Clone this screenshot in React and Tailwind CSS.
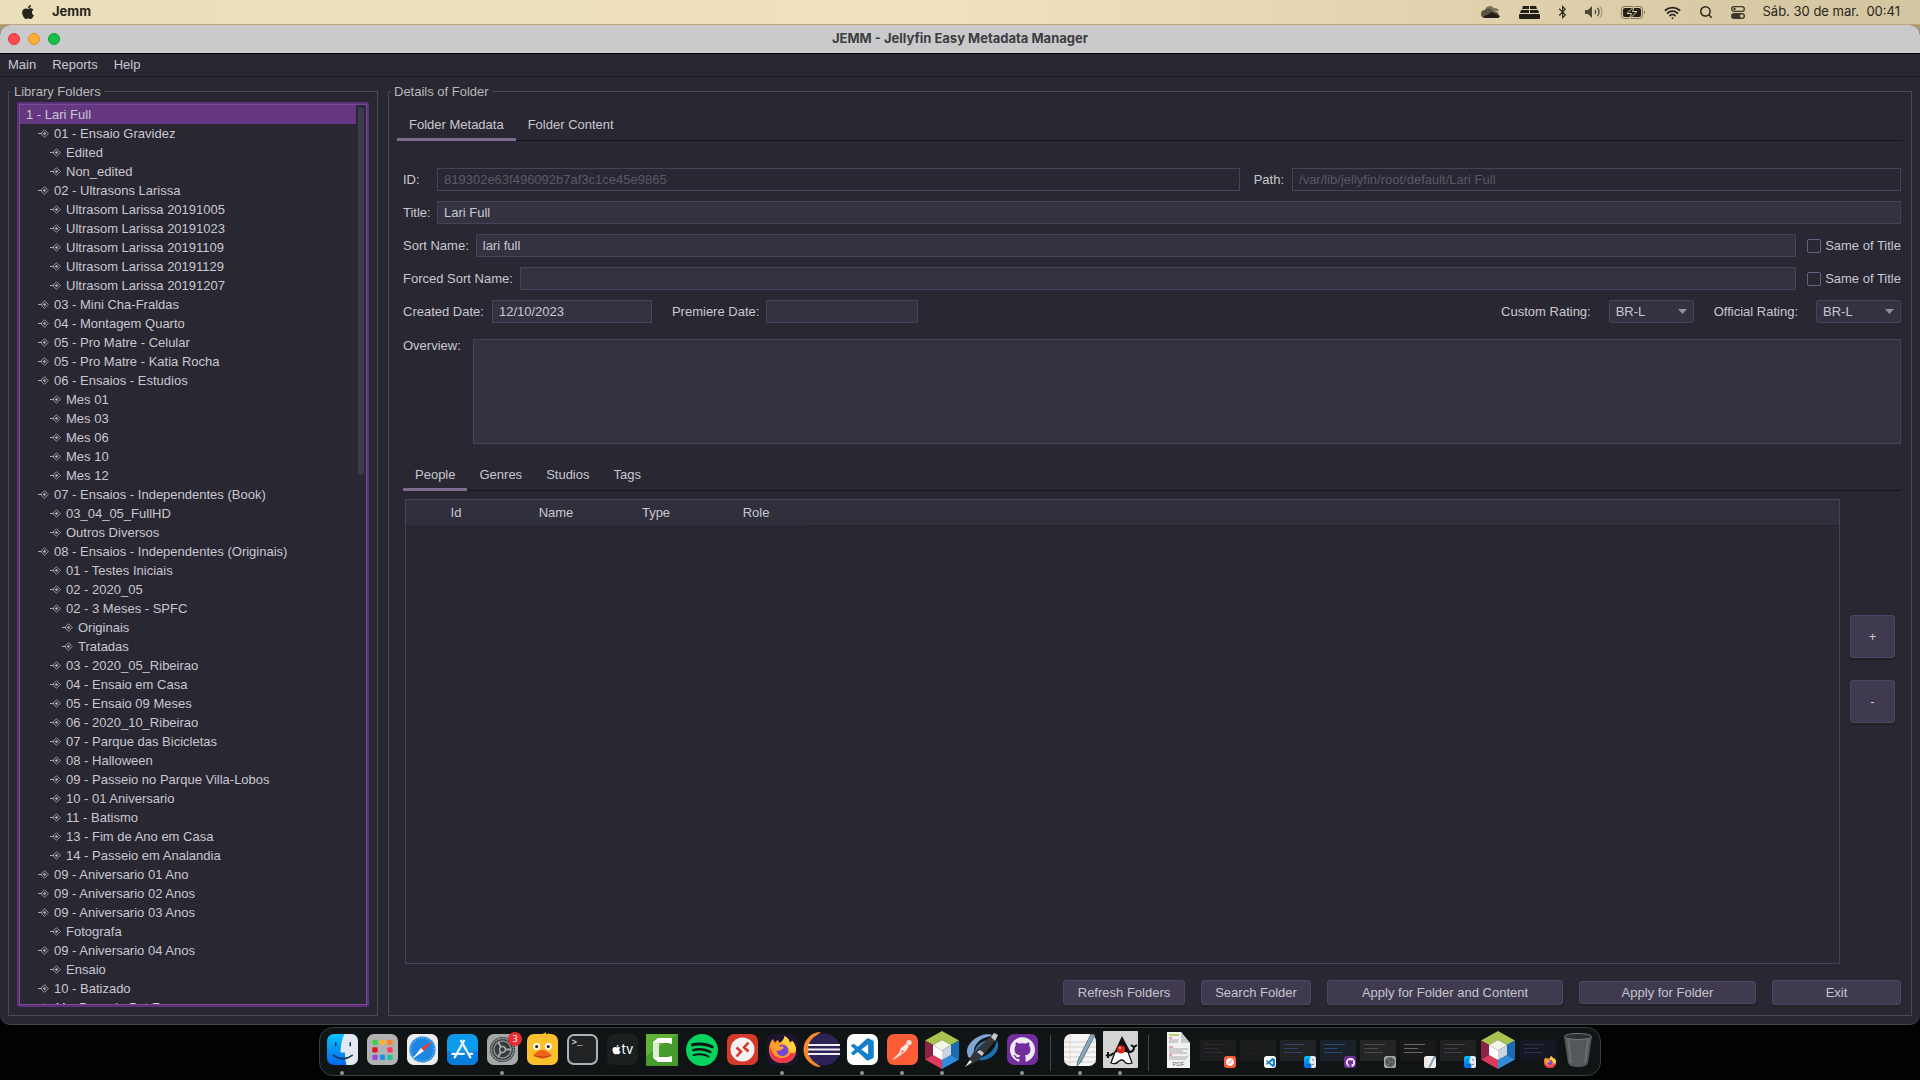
import { useState } from "react";
import { FaApple, FaBluetoothB } from "react-icons/fa";
import { SiSpotify, SiGithub, SiPostman } from "react-icons/si";
import { BiLogoVisualStudio } from "react-icons/bi";
import { Search, Wifi } from "lucide-react";

const FOLDERS = [
  [0, "1 - Lari Full"],
  [1, "01 - Ensaio Gravidez"],
  [2, "Edited"],
  [2, "Non_edited"],
  [1, "02 - Ultrasons Larissa"],
  [2, "Ultrasom Larissa 20191005"],
  [2, "Ultrasom Larissa 20191023"],
  [2, "Ultrasom Larissa 20191109"],
  [2, "Ultrasom Larissa 20191129"],
  [2, "Ultrasom Larissa 20191207"],
  [1, "03 - Mini Cha-Fraldas"],
  [1, "04 - Montagem Quarto"],
  [1, "05 - Pro Matre - Celular"],
  [1, "05 - Pro Matre - Katia Rocha"],
  [1, "06 - Ensaios - Estudios"],
  [2, "Mes 01"],
  [2, "Mes 03"],
  [2, "Mes 06"],
  [2, "Mes 10"],
  [2, "Mes 12"],
  [1, "07 - Ensaios - Independentes (Book)"],
  [2, "03_04_05_FullHD"],
  [2, "Outros Diversos"],
  [1, "08 - Ensaios - Independentes (Originais)"],
  [2, "01 - Testes Iniciais"],
  [2, "02 - 2020_05"],
  [2, "02 - 3 Meses - SPFC"],
  [3, "Originais"],
  [3, "Tratadas"],
  [2, "03 - 2020_05_Ribeirao"],
  [2, "04 - Ensaio em Casa"],
  [2, "05 - Ensaio 09 Meses"],
  [2, "06 - 2020_10_Ribeirao"],
  [2, "07 - Parque das Bicicletas"],
  [2, "08 - Halloween"],
  [2, "09 - Passeio no Parque Villa-Lobos"],
  [2, "10 - 01 Aniversario"],
  [2, "11 - Batismo"],
  [2, "13 - Fim de Ano em Casa"],
  [2, "14 - Passeio em Analandia"],
  [1, "09 - Aniversario 01 Ano"],
  [1, "09 - Aniversario 02 Anos"],
  [1, "09 - Aniversario 03 Anos"],
  [2, "Fotografa"],
  [1, "09 - Aniversario 04 Anos"],
  [2, "Ensaio"],
  [1, "10 - Batizado"],
  [1, "11 - Passeio Pet Zoo"],
];

const INDENT = ["pl-[6px]", "pl-[18px]", "pl-[30px]", "pl-[42px]"];

const FIELD = "h-[23px] min-w-0 rounded-none border border-[#45435a] bg-[#343241] px-[6px] outline-none";
const BUTTON = "rounded-[3px] border border-[#4b4766] bg-[#3f3a50] text-[#c6c5ce] shadow-[0_2px_1px_#222222]";

/* ---------- macOS menu bar ---------- */

const MacMenuBar = () => (
  <header className="flex h-[25px] shrink-0 items-center border-b border-[#bfa678] bg-linear-to-r from-[#eadfba] via-[#f1e0bc] to-[#d3c59f] px-5 font-[Inter,sans-serif] text-[13px] text-[#28251c]">
    <FaApple size={16} />
    <span className="ml-4 font-bold">Jemm</span>
    <div className="ml-auto flex items-center gap-[18px]">
      <svg width="20" height="14" viewBox="0 0 20 14">
        <path d="M4 6a5 5 0 0 1 9-3 4.500 4.500 0 0 1 5 3z" fill="#7d755f" />
        <path d="M4 13a4 4 0 0 1 0-8 5 5 0 0 1 8 1l4 1a3.500 3.500 0 0 1 0 6z" fill="#5a5444" />
        <path d="M2 12l9-5 8 4a3 3 0 0 1-2 2H4z" fill="#221f18" />
      </svg>
      <svg width="21" height="15" viewBox="0 0 21 15" fill="#221f18">
        <path d="M4 1h6v3H3zM11 1h6l1 3h-7zM2 5h8v3H1zM11 5h8l1 3h-9zM1 9h19q1 0 1 1v3q0 1-1 1H1q-1 0-1-1v-3q0-1 1-1z" />
      </svg>
      <FaBluetoothB className="w-[9px]" size={14} />
      <svg width="18" height="14" viewBox="0 0 18 14" fill="none" stroke="#4d4839" strokeWidth="1.300">
        <path d="M0 5h3l4-4v12L3 9H0z" fill="#4d4839" stroke="none" />
        <path d="M10 5q1.500 2 0 4M12.500 3q3 4 0 8" />
        <path d="M15 1.500q4 5.500 0 11" stroke="#a79b7c" />
      </svg>
      <svg width="25" height="13" viewBox="0 0 25 13">
        <rect x=".5" y=".5" width="21" height="12" rx="3" fill="none" stroke="#7a725c" />
        <rect x="2" y="2" width="18" height="9" rx="2" fill="#221f18" />
        <path d="M13.500 0L6 7.500h4.500L8.500 13 16 5.500h-4.500z" fill="#221f18" stroke="#d8c9a3" />
        <path d="M23 4.500q2 2 0 4z" fill="#7a725c" />
      </svg>
      <Wifi size={17} strokeWidth={2.5} />
      <Search size={14} strokeWidth={2.5} />
      <svg width="14" height="13" viewBox="0 0 14 13">
        <rect x=".7" y=".7" width="12.600" height="4.600" rx="2.300" fill="none" stroke="#3b372b" strokeWidth="1.300" />
        <circle cx="3.500" cy="3" r="1.200" fill="#3b372b" />
        <rect y="7" width="14" height="6" rx="3" fill="#3b372b" />
        <circle cx="10.800" cy="10" r="1.800" fill="#d8c9a3" />
      </svg>
      <span className="whitespace-pre">Sáb. 30 de mar.  00:41</span>
    </div>
  </header>
);

/* ---------- Application window ---------- */

const TitleBar = () => (
  <div className="relative flex h-[29px] shrink-0 items-center gap-2 rounded-t-[10px] border-b border-black bg-[#cacacc] pl-2">
    <button aria-label="Close" className="size-3 rounded-full border border-[#e0383c] bg-[#fc4a4d]" />
    <button aria-label="Minimize" className="size-3 rounded-full border border-[#de9227] bg-[#fdad38]" />
    <button aria-label="Zoom" className="size-3 rounded-full border border-[#0f9f35] bg-[#16bf45]" />
    <h1 className="pointer-events-none absolute inset-x-0 pb-[2px] text-center font-[Inter,sans-serif] text-[13px] font-bold text-[#3d3d3f]">
      JEMM - Jellyfin Easy Metadata Manager
    </h1>
  </div>
);

const NodeIcon = () => (
  <svg width="11" height="9" viewBox="0 0 11 9" fill="none" stroke="#a3a2ab" className="mr-[5px] shrink-0">
    <path d="M0 4.500h4" />
    <path d="M6.500.7l3.800 3.800-3.800 3.800-3.800-3.800z" strokeWidth=".9" />
    <path d="M6.500 2.700l1.800 1.800-1.800 1.800-1.800-1.800z" fill="#a3a2ab" stroke="none" />
  </svg>
);

const FolderTree = () => {
  const [selected, setSelected] = useState(0);

  return (
    <fieldset className="flex w-[370px] shrink-0 flex-col border border-[#4a4a4d] px-2 pt-[3px] pb-2">
      <legend className="-ml-[6px] px-[3px] text-[#b9b8b8]">Library Folders</legend>
      <div className="flex min-h-0 flex-1 rounded-[2px] border-2 border-[#5e2f7a]">
        <div className="flex min-h-0 min-w-0 flex-1 border border-[#7a4a96]">
          <ul className="min-w-0 flex-1 overflow-hidden">
            {FOLDERS.map(([level, name], i) => (
              <li key={i}>
                <button
                  onClick={() => setSelected(i)}
                  className={`flex h-[19px] w-full items-center whitespace-nowrap ${INDENT[level]} ${selected === i ? "bg-[#653781]" : ""}`}
                >
                  {level > 0 && <NodeIcon />}
                  {name}
                </button>
              </li>
            ))}
          </ul>
          <div className="w-[10px] shrink-0 px-[2px] pt-[2px]">
            <div className="h-[41%] rounded-full bg-[#3c3b4f]" />
          </div>
        </div>
      </div>
    </fieldset>
  );
};

const Tabs = ({ items, className = "" }) => {
  const [active, setActive] = useState(items[0]);

  return (
    <div role="tablist" className={`flex h-[31px] shrink-0 bg-[linear-gradient(#17161f,#17161f)] bg-[length:100%_1px] bg-[position:0_30px] bg-no-repeat ${className}`}>
      {items.map((item) => (
        <button
          key={item}
          role="tab"
          aria-selected={item === active}
          onClick={() => setActive(item)}
          className={`border-b-3 px-3 ${item === active ? "border-[#7f6a90]" : "border-transparent"}`}
        >
          {item}
        </button>
      ))}
    </div>
  );
};

const SameOfTitle = ({ id }) => (
  <div className="ml-1 flex items-center gap-1">
    <input id={id} type="checkbox" className="size-[14px] appearance-none rounded-[2px] border border-[#6a5f80] checked:bg-[#7f6a90]" />
    <label htmlFor={id}>Same of Title</label>
  </div>
);

const RatingSelect = ({ id, label }) => (
  <div className="flex items-center gap-[18px]">
    <label htmlFor={id}>{label}</label>
    <div className="relative">
      <select id={id} className="block h-[23px] w-[85px] appearance-none rounded-[2px] border border-[#45435a] bg-[#343241] px-[6px] outline-none">
        <option>BR-L</option>
        <option>BR-10</option>
        <option>BR-12</option>
      </select>
      <svg width="9" height="5" viewBox="0 0 9 5" className="pointer-events-none absolute top-[9px] right-[7px]">
        <path d="M0 0h9L4.500 5z" fill="#918f9e" />
      </svg>
    </div>
  </div>
);

const MetadataForm = () => (
  <div className="flex shrink-0 flex-col gap-[10px]">
    <div className="flex items-center">
      <label htmlFor="id" className="w-[34px] shrink-0">ID:</label>
      <input id="id" disabled defaultValue="819302e63f496092b7af3c1ce45e9865" className={`${FIELD} flex-57 bg-transparent text-[#5b5969]`} />
      <label htmlFor="path" className="mx-[8px] pl-[6px]">Path:</label>
      <input id="path" disabled defaultValue="/var/lib/jellyfin/root/default/Lari Full" className={`${FIELD} flex-43 bg-transparent text-[#5b5969]`} />
    </div>
    <div className="flex items-center">
      <label htmlFor="title" className="w-[34px] shrink-0">Title:</label>
      <input id="title" defaultValue="Lari Full" className={`${FIELD} flex-1`} />
    </div>
    <div className="flex items-center gap-[7px]">
      <label htmlFor="sort">Sort Name:</label>
      <input id="sort" defaultValue="lari full" className={`${FIELD} flex-1`} />
      <SameOfTitle id="sort-same" />
    </div>
    <div className="flex items-center gap-[7px]">
      <label htmlFor="forced">Forced Sort Name:</label>
      <input id="forced" className={`${FIELD} flex-1`} />
      <SameOfTitle id="forced-same" />
    </div>
    <div className="flex items-center gap-5">
      <div className="flex items-center gap-2">
        <label htmlFor="created">Created Date:</label>
        <input id="created" defaultValue="12/10/2023" className={`${FIELD} w-[160px]`} />
      </div>
      <div className="mr-auto flex items-center gap-[7px]">
        <label htmlFor="premiere">Premiere Date:</label>
        <input id="premiere" className={`${FIELD} w-[152px]`} />
      </div>
      <RatingSelect id="custom" label="Custom Rating:" />
      <RatingSelect id="official" label="Official Rating:" />
    </div>
    <div className="mt-[6px] flex">
      <label htmlFor="overview" className="w-[70px] shrink-0 leading-[13px]">Overview:</label>
      <textarea id="overview" className="h-[105px] flex-1 resize-none border border-[#45435a] bg-[#343241] px-[6px] outline-none" />
    </div>
  </div>
);

const PeopleTable = () => (
  <div className="mt-2 flex min-h-0 flex-1 pl-[2px]">
    <div className="flex-1 border border-[#45435a]">
      <table className="w-full table-fixed border-collapse">
        <thead>
          <tr className="h-[25px] bg-[#302f3c]">
            {["Id", "Name", "Type", "Role"].map((name) => (
              <th key={name} className="w-[100px] p-0 text-center font-normal">{name}</th>
            ))}
            <th aria-hidden="true" className="border-b border-[#2a2027] p-0" />
          </tr>
        </thead>
        <tbody />
      </table>
    </div>
    <div className="flex flex-col gap-[22px] px-[6px] pt-[116px] pl-[10px]">
      <button aria-label="Add" className={`${BUTTON} h-[43px] w-[45px]`}>+</button>
      <button aria-label="Remove" className={`${BUTTON} h-[43px] w-[45px]`}>-</button>
    </div>
  </div>
);

const FolderDetails = () => (
  <fieldset className="flex min-w-0 flex-1 flex-col border border-[#4a4a4d] px-2 pt-[11px] pb-[10px]">
    <legend className="-ml-[6px] px-[3px] text-[#b9b8b8]">Details of Folder</legend>
    <Tabs items={["Folder Metadata", "Folder Content"]} />
    <div className="flex min-h-0 flex-1 flex-col pt-[27px] pr-[2px] pl-[6px]">
      <MetadataForm />
      <Tabs items={["People", "Genres", "Studios", "Tags"]} className="mt-4" />
      <PeopleTable />
      <div className="mt-4 flex items-center justify-end gap-4">
        <button className={`${BUTTON} h-[25px] w-[122px]`}>Refresh Folders</button>
        <button className={`${BUTTON} h-[25px] w-[110px]`}>Search Folder</button>
        <button className={`${BUTTON} h-[25px] w-[236px]`}>Apply for Folder and Content</button>
        <button className={`${BUTTON} h-[23px] w-[177px]`}>Apply for Folder</button>
        <button className={`${BUTTON} h-[25px] w-[129px]`}>Exit</button>
      </div>
    </div>
  </fieldset>
);

/* ---------- Dock ---------- */

const Tile = ({ className, children }) => (
  <span className={`flex size-[31px] items-center justify-center overflow-hidden rounded-[7px] ${className}`}>{children}</span>
);

const Finder = ({ size = 31 }) => (
  <svg width={size} height={size} viewBox="0 0 32 32">
    <defs>
      <linearGradient id="finder" x2="0" y2="1">
        <stop stopColor="#06c3fd" />
        <stop offset="1" stopColor="#0468ec" />
      </linearGradient>
    </defs>
    <rect width="32" height="32" rx="7" fill="url(#finder)" />
    <path d="M18 0h7a7 7 0 0 1 7 7v18a7 7 0 0 1-7 7h-5q-1.500-6-1.500-13H14Q14 8 18 0z" fill="#e4e8f0" />
    <path d="M9 9v3M24 9v3M6.500 22q10 7 19.500 0" fill="none" stroke="#17334f" strokeWidth="1.600" strokeLinecap="round" />
  </svg>
);

const PAD_COLORS = ["#3fd24e", "#f9b42e", "#f78626", "#dd1526", "#a9b3b8", "#fb3b5b", "#9d45d6", "#1694ec", "#23c298"];

const Launchpad = () => (
  <svg width="31" height="31" viewBox="0 0 32 32">
    <rect width="32" height="32" rx="7" fill="#b2b2b4" />
    {PAD_COLORS.map((color, i) => (
      <rect key={color} x={5.5 + (i % 3) * 7.700} y={6 + Math.floor(i / 3) * 7.700} width="5.600" height="5.400" rx="1.200" fill={color} />
    ))}
  </svg>
);

const Safari = () => (
  <svg width="31" height="31" viewBox="0 0 32 32">
    <rect width="32" height="32" rx="7" fill="#eeeeef" />
    <circle cx="16" cy="16" r="13.500" fill="#1c86e0" />
    <circle cx="16" cy="16" r="12" fill="none" stroke="#a9d6f7" strokeWidth="1.500" strokeDasharray=".6 1.500" />
    <path d="M27 7L17.500 17.500l-3-3z" fill="#f03a34" />
    <path d="M5 26l9.500-11.500 3 3z" fill="#f3f3f3" />
  </svg>
);

const AppStore = () => (
  <svg width="31" height="31" viewBox="0 0 32 32">
    <rect width="32" height="32" rx="7" fill="#0c9bea" />
    <path d="M0 18h32v7a7 7 0 0 1-7 7H7a7 7 0 0 1-7-7z" fill="#087ddc" />
    <g stroke="#e9f6ff" strokeWidth="2.400" strokeLinecap="round">
      <path d="M17.500 7L8 24M14.500 7L24 24M5.500 20.500h12M22.500 20.500H26" />
    </g>
  </svg>
);

const Gear = ({ size = 31 }) => (
  <svg width={size} height={size} viewBox="0 0 32 32" fill="none">
    <rect width="32" height="32" rx="7" fill="#a4a8a9" />
    <circle cx="16" cy="16" r="13" fill="#37393b" />
    <circle cx="16" cy="16" r="11.500" stroke="#a6a8aa" strokeWidth="1.800" strokeDasharray="1.300 .8" />
    <circle cx="16" cy="16" r="8.800" stroke="#8e9092" strokeWidth="1.500" />
    <circle cx="16" cy="16" r="3" stroke="#a6a8aa" strokeWidth="1.500" />
    <path d="M19 16h6M14.500 13.400l-3-5.200M14.500 18.600l-3 5.200" stroke="#a6a8aa" strokeWidth="2" />
  </svg>
);

const Duck = () => (
  <svg width="31" height="34" viewBox="0 0 32 35">
    <path d="M14 4l6-3-1 3 4-2-1 5z" fill="#f9bb25" />
    <rect y="3" width="32" height="32" rx="7" fill="#fbc02c" />
    <circle cx="10" cy="16" r="3.600" fill="#fff" />
    <circle cx="22" cy="16" r="3.600" fill="#fff" />
    <circle cx="10" cy="16" r="1.700" fill="#292929" />
    <circle cx="22" cy="16" r="1.700" fill="#292929" />
    <path d="M6.500 25q9-11 19 0-9.500 7-19 0z" fill="#f0651c" />
    <path d="M7 25.500q9 3 18 0" fill="none" stroke="#b8400f" />
  </svg>
);

const Camtasia = () => (
  <svg width="32" height="32" viewBox="0 0 32 32">
    <rect width="32" height="32" rx="1" fill="#479a2c" />
    <path d="M0 0h32L0 22z" fill="#62b038" />
    <path d="M26 4v6l-4-1h-9v14h9l4-1v6H12l-5-4V8l5-4z" fill="#fff" />
    <path d="M7 8l6 1v14l-6 1z" fill="#dbeed4" />
  </svg>
);

const Eclipse = () => (
  <svg width="38" height="35" viewBox="0 0 38 35">
    <path d="M18 0a17.500 17.500 0 0 0 0 35A21 21 0 0 1 18 0z" fill="#f7882e" />
    <circle cx="21" cy="17.500" r="16" fill="#2c2255" />
    <path d="M5 13h32M5 17.500h32M5 22h32" stroke="#f0edf6" strokeWidth="2" />
  </svg>
);

const NetBeans = () => (
  <svg width="34" height="38" viewBox="0 0 34 38">
    <path d="M17 0l17 9.500-8 4.500-9-5-9 5-8-4.500z" fill="#a9c34f" />
    <path d="M0 9.500L8 14v10l-8 4.500z" fill="#8c2246" />
    <path d="M0 28.500L8 24l9 5v9z" fill="#dc3a5b" />
    <path d="M34 9.500L26 14v10l8 4.500z" fill="#1b6ab4" />
    <path d="M34 28.500L26 24l-9 5v9z" fill="#318bd8" />
    <path d="M17 9l9 5-9 5.500L8 14z" fill="#f3f5e6" />
    <path d="M8 14l9 5.500V29l-9-5z" fill="#fff" />
    <path d="M26 14l-9 5.500V29l9-5z" fill="#c9d5e2" />
  </svg>
);

const PenOrbit = () => (
  <svg width="36" height="36" viewBox="0 0 36 36">
    <path d="M5 26C-4 12 20-3 30 4 18 4 8 12 10 23z" fill="#7ea6d3" />
    <path d="M33 8c6 14-12 24-22 19 13-2 20-9 22-19z" fill="#1c6fae" />
    <path d="M11 21c2-8 10-13 17-12" fill="none" stroke="#3f7fb6" strokeWidth="2" />
    <path d="M30 1l4 2-3 6-16 19-9 5-5 2 3-5 5-9z" fill="#33363b" />
    <path d="M30 1l4 2-3 6-4-4zM16 18l4 3-2 3-5-4z" fill="#c5c8cc" />
    <path d="M1 35l5-7 2 2z" fill="#ececec" />
  </svg>
);

const TextEdit = ({ size = 32 }) => (
  <svg width={size} height={size} viewBox="0 0 32 32">
    <rect width="32" height="32" rx="7" fill="#f6f6f4" />
    <path d="M0 8h32M0 13h32M0 18h32M0 23h32M0 28h32" stroke="#cfcfcf" />
    <path d="M6 0v32" stroke="#f3cdc9" />
    <path d="M27 0l4 1-14 27-4 4 1-6z" fill="#87a9bd" stroke="#4e6472" strokeWidth=".8" />
  </svg>
);

const Duke = () => (
  <svg width="35" height="37" viewBox="0 0 35 37">
    <rect width="35" height="37" rx="1" fill="#d4d4d4" />
    <path d="M19 5l9 17H11z" fill="#111" />
    <path d="M12 21q6-2 13 0l4 11q-6 2-8-2-2-2-5 0-3 4-8 2z" fill="#fff" stroke="#111" strokeWidth="1.300" />
    <path d="M11 22q-5 4-8 2m2-3v6M26 21q5 0 5-5m-3-2l3 2 3-2" fill="none" stroke="#111" strokeWidth="2" />
    <circle cx="18" cy="18.500" r="4" fill="#e2261c" />
    <circle cx="17" cy="17" r="1.200" fill="#ff9a8f" />
  </svg>
);

const PdfFile = () => (
  <svg width="23" height="36" viewBox="0 0 23 36">
    <path d="M0 0h14l9 11v25H0z" fill="#f1f1f1" />
    <path d="M14 0l9 11h-9z" fill="#c9c9c9" />
    <path d="M2 2h10v2H2z" fill="#b9d46c" />
    <path d="M2 8h10M2 10h9M2 17h19M2 19h14M2 21h18M2 25h19M2 27h17" stroke="#9a9a9a" strokeWidth=".8" />
    <path d="M2 6h3M2 15h4M2 23h3" stroke="#d25a78" />
    <text x="11.500" y="34" textAnchor="middle" fontSize="6" fontFamily="Liberation Sans, sans-serif" fill="#6b6b6b">PDF</text>
  </svg>
);

const Trash = () => (
  <svg width="28" height="34" viewBox="0 0 28 34">
    <path d="M0 3h28l-4 27q-1 4-10 4T4 30z" fill="#53585b" />
    <path d="M4 6l3 24M24 6l-3 24" stroke="#686e71" strokeWidth="2" />
    <ellipse cx="14" cy="3.500" rx="13.500" ry="3" fill="#2b2f31" stroke="#74797c" />
  </svg>
);

const Firefox = ({ size = 27 }) => (
  <svg width={size} height={size} viewBox="0 0 28 28">
    <path d="M14 28C5 28 0 22 0 14 0 9 2 5 4 3l2 4 3-3 2 3c3-1 5-4 5-7 4 2 5 5 6 7l2-2c3 3 4 6 4 10 0 8-6 13-14 13z" fill="#ff9a2a" />
    <path d="M1 11c2 8 6 12 12 12 7 0 11-5 12-12 5 9-1 17-11 17C5 28-1 20 1 11z" fill="#f0344f" />
    <path d="M16 0c4 2 5 5 6 7l2-2c2 2 4 6 4 9-2 7-7 3-8-1-2-4-5-5-9-6 3-1 5-4 5-7z" fill="#ffcf3c" />
    <circle cx="14" cy="15" r="6" fill="#7a46d6" />
    <path d="M5 11c3-2 6 0 8 0 3 0 3 2 0 3-2 1-3 2-5 1z" fill="#ffa436" />
  </svg>
);

const VsCode = ({ size = 24 }) => <BiLogoVisualStudio size={size} color="#1380cc" />;

const Thumb = ({ tint, lines, children }) => (
  <span className={`relative mt-[2px] block h-[21px] w-9 p-1 ${tint}`}>
    <span className={`block h-px w-3/4 ${lines}`} />
    <span className={`mt-[3px] block h-px w-1/2 ${lines}`} />
    <span className={`mt-[3px] block h-px w-2/3 ${lines}`} />
    <span className="absolute top-4 left-6 flex">{children}</span>
  </span>
);

const MiniTile = ({ className, children }) => (
  <span className={`flex size-3 items-center justify-center rounded-[3px] ${className}`}>{children}</span>
);

const DOCK_APPS = [
  { name: "Finder", running: true, icon: <Finder /> },
  { name: "Launchpad", icon: <Launchpad /> },
  { name: "Safari", icon: <Safari /> },
  { name: "App Store", icon: <AppStore /> },
  { name: "System Settings", running: true, badge: "3", icon: <Gear /> },
  { name: "Cyberduck", icon: <Duck />, raised: true },
  {
    name: "Terminal",
    icon: (
      <Tile className="items-start! justify-start! border-2 border-[#a9b5b5] bg-[#212223] pt-[2px] pl-[3px] font-[Liberation_Mono,monospace] text-[9px] leading-[10px] text-white">
        &gt;_
      </Tile>
    ),
  },
  {
    name: "TV",
    icon: (
      <Tile className="bg-[#19201f] font-[Inter,sans-serif] text-[13px] text-white">
        <FaApple size={11} />tv
      </Tile>
    ),
  },
  { name: "Camtasia", icon: <Camtasia /> },
  { name: "Spotify", icon: <SiSpotify size={32} color="#07d35f" /> },
  {
    name: "Remote Desktop",
    icon: (
      <Tile className="bg-[#d33a2a]">
        <svg width="25" height="25" viewBox="0 0 25 25">
          <circle cx="12.500" cy="12.500" r="12" fill="#f5f1f0" />
          <path d="M6.500 10.500l4.500 4-4.500 5M18.500 5.500l-4.500 5 4.500 4" fill="none" stroke="#d33a2a" strokeWidth="2.600" />
        </svg>
      </Tile>
    ),
  },
  { name: "Firefox", running: true, icon: <Tile className="bg-[#1d1530]"><Firefox /></Tile> },
  { name: "Eclipse", icon: <Eclipse /> },
  { name: "Visual Studio Code", running: true, icon: <Tile className="bg-white"><VsCode size={27} /></Tile> },
  {
    name: "Postman",
    running: true,
    icon: (
      <Tile className="bg-[#fc5d36]">
        <svg width="24" height="24" viewBox="0 0 24 24" fill="#fde6df">
          <circle cx="19" cy="4.500" r="2.600" />
          <path d="M16 6l3 2-3 5-5 4-8 5-.5-.5L9 15l2-5z" />
          <path d="M12 12l2 1-3 3z" fill="#fc5d36" />
        </svg>
      </Tile>
    ),
  },
  { name: "NetBeans", running: true, icon: <NetBeans /> },
  { name: "DB Designer", icon: <PenOrbit /> },
  { name: "GitHub Desktop", running: true, icon: <Tile className="bg-[#722f9b]"><SiGithub size={25} color="#efe9f3" /></Tile> },
];

const DOCK_RECENT = [
  { name: "TextEdit", running: true, icon: <TextEdit /> },
  { name: "Java", running: true, icon: <Duke /> },
];

const DOCK_WINDOWS = [
  { name: "PDF document", icon: <PdfFile /> },
  { name: "Postman window", icon: <Thumb tint="bg-[#1c1d1f]" lines="bg-[#2c2e31]"><MiniTile className="bg-[#fc5d36]"><SiPostman size={8} color="#fff" /></MiniTile></Thumb> },
  { name: "Code window", icon: <Thumb tint="bg-[#1b1c1e]" lines="bg-[#1f2022]"><MiniTile className="bg-white"><VsCode size={11} /></MiniTile></Thumb> },
  { name: "Finder window", icon: <Thumb tint="bg-[#202225]" lines="bg-[#2d4264]"><Finder size={12} /></Thumb> },
  { name: "GitHub window", icon: <Thumb tint="bg-[#1b2128]" lines="bg-[#254876]"><MiniTile className="bg-[#722f9b]"><SiGithub size={9} color="#fff" /></MiniTile></Thumb> },
  { name: "Settings window", icon: <Thumb tint="bg-[#242626]" lines="bg-[#494b4b]"><Gear size={12} /></Thumb> },
  { name: "Text window", icon: <Thumb tint="bg-[#191919]" lines="bg-[#666666]"><TextEdit size={12} /></Thumb> },
  { name: "Downloads window", icon: <Thumb tint="bg-[#202123]" lines="bg-[#3f4144]"><Finder size={12} /></Thumb> },
  { name: "NetBeans window", icon: <NetBeans /> },
  { name: "Firefox window", icon: <Thumb tint="bg-[#171723]" lines="bg-[#2f3050]"><Firefox size={12} /></Thumb> },
  { name: "Trash", icon: <Trash /> },
];

const DockItem = ({ item }) => (
  <button aria-label={item.name} className="relative flex h-full w-10 items-center justify-center">
    <span className={item.raised ? "mb-1" : ""}>{item.icon}</span>
    {item.badge && (
      <span className="absolute top-1 right-0 flex size-[14px] items-center justify-center rounded-full bg-[#ea2c30] text-[9px] text-white">
        {item.badge}
      </span>
    )}
    {item.running && <span className="absolute -bottom-1 size-1 rounded-full bg-[#929496]" />}
  </button>
);

const Dock = () => (
  <nav aria-label="Dock" className="flex shrink-0 justify-center pt-[2px] pb-1">
    <div className="flex h-[49px] rounded-[14px] border border-[#3a3c3d] bg-[#101415] px-[2px] pb-[4px]">
      {DOCK_APPS.map((item) => <DockItem key={item.name} item={item} />)}
      <span className="mx-[8px] mt-[7px] h-9 w-[2px] border-l border-[#45494b]" />
      {DOCK_RECENT.map((item) => <DockItem key={item.name} item={item} />)}
      <span className="mx-[8px] mt-[7px] h-9 w-[2px] border-l border-[#45494b]" />
      {DOCK_WINDOWS.map((item) => <DockItem key={item.name} item={item} />)}
    </div>
  </nav>
);

export default function App() {
  return (
    <div className="flex h-screen flex-col overflow-hidden bg-[#010303]">
      <MacMenuBar />
      <div className="flex min-h-0 flex-1 flex-col bg-linear-to-b from-[#ab9970] from-50% to-[#010303] to-50%">
        <main className="flex min-h-0 flex-1 flex-col rounded-[10px] border-b border-[#46454e] bg-[#282732] font-[Liberation_Sans,Arial,sans-serif] text-[13px] leading-[15px] text-[#c9c8d0]">
          <TitleBar />
          <nav className="flex h-[23px] shrink-0 items-center gap-4 border-b border-[#191820] px-2 pb-[2px]">
            <button>Main</button>
            <button>Reports</button>
            <button>Help</button>
          </nav>
          <div className="flex min-h-0 flex-1 gap-[10px] px-2 pt-[7px] pb-2">
            <FolderTree />
            <FolderDetails />
          </div>
        </main>
      </div>
      <Dock />
    </div>
  );
}
